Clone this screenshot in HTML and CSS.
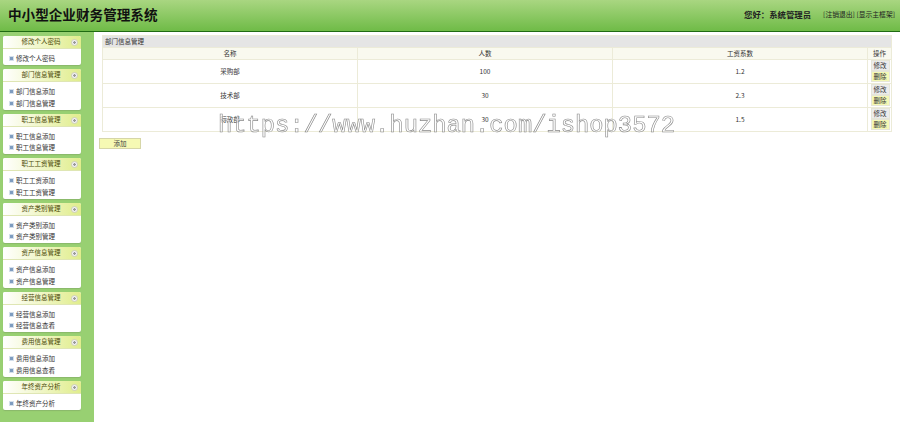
FILE: index.html
```html
<!DOCTYPE html>
<html lang="zh-CN">
<head>
  <meta charset="UTF-8">
  <title>中小型企业财务管理系统</title>
  <link rel="stylesheet" href="styles.css">
</head>
<body>

  <div class="top">
    <h1>中小型企业财务管理系统</h1>
    <div class="top-right">
      <strong>您好：系统管理员</strong>
      <span class="top-links">[注销退出] [显示主框架]</span>
    </div>
  </div>

  <div class="main">
    <div class="side">
      <div class="box">
        <div class="box-head"><span>修改个人密码</span><i class="arrow"></i></div>
        <ul><li>修改个人密码</li></ul>
      </div>
      <div class="box">
        <div class="box-head"><span>部门信息管理</span><i class="arrow"></i></div>
        <ul><li>部门信息添加</li><li>部门信息管理</li></ul>
      </div>
      <div class="box">
        <div class="box-head"><span>职工信息管理</span><i class="arrow"></i></div>
        <ul><li>职工信息添加</li><li>职工信息管理</li></ul>
      </div>
      <div class="box">
        <div class="box-head"><span>职工工资管理</span><i class="arrow"></i></div>
        <ul><li>职工工资添加</li><li>职工工资管理</li></ul>
      </div>
      <div class="box">
        <div class="box-head"><span>资产类别管理</span><i class="arrow"></i></div>
        <ul><li>资产类别添加</li><li>资产类别管理</li></ul>
      </div>
      <div class="box">
        <div class="box-head"><span>资产信息管理</span><i class="arrow"></i></div>
        <ul><li>资产信息添加</li><li>资产信息管理</li></ul>
      </div>
      <div class="box">
        <div class="box-head"><span>经营信息管理</span><i class="arrow"></i></div>
        <ul><li>经营信息添加</li><li>经营信息查看</li></ul>
      </div>
      <div class="box">
        <div class="box-head"><span>费用信息管理</span><i class="arrow"></i></div>
        <ul><li>费用信息添加</li><li>费用信息查看</li></ul>
      </div>
      <div class="box">
        <div class="box-head"><span>年终资产分析</span><i class="arrow"></i></div>
        <ul><li>年终资产分析</li></ul>
      </div>
    </div>

    <div class="content">
      <table class="list">
        <colgroup>
          <col class="col">
          <col class="col">
          <col class="col">
          <col class="col-op">
        </colgroup>
        <tr><td class="title" colspan="4">部门信息管理</td></tr>
        <tr class="head">
          <td>名称</td>
          <td>人数</td>
          <td>工资系数</td>
          <td>操作</td>
        </tr>
        <tr>
          <td>采购部</td><td>100</td><td>1.2</td>
          <td class="ops"><button class="btn">修改</button><button class="btn btn-del">删除</button></td>
        </tr>
        <tr>
          <td>技术部</td><td>30</td><td>2.3</td>
          <td class="ops"><button class="btn">修改</button><button class="btn btn-del">删除</button></td>
        </tr>
        <tr>
          <td>行政部</td><td>30</td><td>1.5</td>
          <td class="ops"><button class="btn">修改</button><button class="btn btn-del">删除</button></td>
        </tr>
      </table>
      <button class="add">添加</button>
    </div>
  </div>

  <div class="watermark">https://www.huzhan.com/ishop3572</div>

</body>
</html>
```

FILE: styles.css
```css
* {
  box-sizing: border-box;
}

html,
body {
  height: 100%;
}

body {
  margin: 0;
  overflow: hidden;
  font-family: "Noto Sans CJK SC", "Liberation Sans", sans-serif;
  font-size: 7px;
  color: #333;
  background: #fff;
}

.top {
  height: 32px;
  display: flex;
  align-items: center;
  justify-content: space-between;
  padding: 0 5px 3px 8px;
  background: linear-gradient(#a9d681, #6fbb47);
  border-bottom: 1px solid #1f6a12;
}

.top h1 {
  margin: 0;
  font-size: 13.6px;
  font-weight: bold;
  color: #111;
}

.top-right {
  display: flex;
  align-items: center;
  gap: 12px;
}

.top-right strong {
  font-size: 8.4px;
  color: #222;
}

.top-links {
  font-size: 6.8px;
  color: #222;
}

.main {
  display: flex;
  height: 390px;
}

.side {
  flex: none;
  width: 94px;
  padding: 4px 13px 0 3px;
  background: #98d072;
}

.box {
  margin-bottom: 4px;
  border-radius: 2px;
  background: #fff;
  box-shadow: 0 1px 1px #8ab76b;
}

.box-head {
  height: 13px;
  display: flex;
  align-items: center;
  justify-content: center;
  position: relative;
  padding: 0 2px 2px 0;
  border-radius: 2px 2px 0 0;
  border-bottom: 1px solid #dfe6b4;
  background: linear-gradient(to right, #fff, #e0ed8c);
  font-size: 6.5px;
  color: #4c4a08;
}

.arrow {
  position: absolute;
  right: 3px;
  top: 3px;
  width: 7px;
  height: 7px;
  border-radius: 50%;
  background: radial-gradient(#999 1px, #f2f2f2 1.5px);
  border: 1px solid #cfcfc0;
}

.box ul {
  list-style: none;
  margin: 0;
  padding: 4px 0 1px 7px;
}

.box li {
  height: 11.25px;
  line-height: 11.25px;
  padding-left: 6px;
  font-size: 6.5px;
  position: relative;
}

.box li::before {
  content: "";
  position: absolute;
  left: 0;
  top: 4px;
  width: 3px;
  height: 3px;
  background: #7e9cc0;
  box-shadow: 0 0 0 1px #d4dfeb;
}

.content {
  flex: 1;
  padding: 3px 9px 0 5px;
}

.list {
  width: 789px;
  margin-left: 3px;
  border-collapse: collapse;
  table-layout: fixed;
  border: 1px solid #ecebd8;
  font-size: 6.5px;
  line-height: 8px;
}

.list td {
  height: 24px;
  padding: 0 0 2px;
  text-align: center;
  border: 1px solid #ecebd8;
}

.list .title {
  height: 12px;
  padding-left: 2px;
  text-align: left;
  background: #e5e5e5;
  color: #333;
}

.list .head td {
  height: 12px;
  background: #f9f9ef;
}

.col {
  width: 255px;
}

.col-op {
  width: 24px;
}

.list .ops {
  padding: 0 0 1px 1px;
  font-size: 0;
}

.btn {
  display: block;
  width: 19px;
  height: 11px;
  padding: 0 0 1px;
  margin: 0 auto;
  font-family: inherit;
  font-size: 6.5px;
  line-height: 8px;
  color: #333;
  background: #ececec;
  border: 1px solid #e6e6d8;
}

.btn-del {
  background: #f4f8b4;
}

.add {
  display: block;
  width: 42px;
  height: 11px;
  margin-top: 6px;
  padding: 0 0 1px;
  font-family: inherit;
  font-size: 6.5px;
  line-height: 8px;
  color: #444;
  background: #f6f9b4;
  border: 1px solid #d6d6a8;
}

/* sits over the table, same as the stamp in the picture */
.watermark {
  position: absolute;
  left: 218px;
  top: 110px;
  font-family: "Liberation Mono", monospace;
  font-size: 23.8px;
  line-height: 32px;
  white-space: nowrap;
  color: rgba(255, 255, 255, 0.6);
  -webkit-text-stroke: 0.6px #888;
  will-change: transform;
}
```
